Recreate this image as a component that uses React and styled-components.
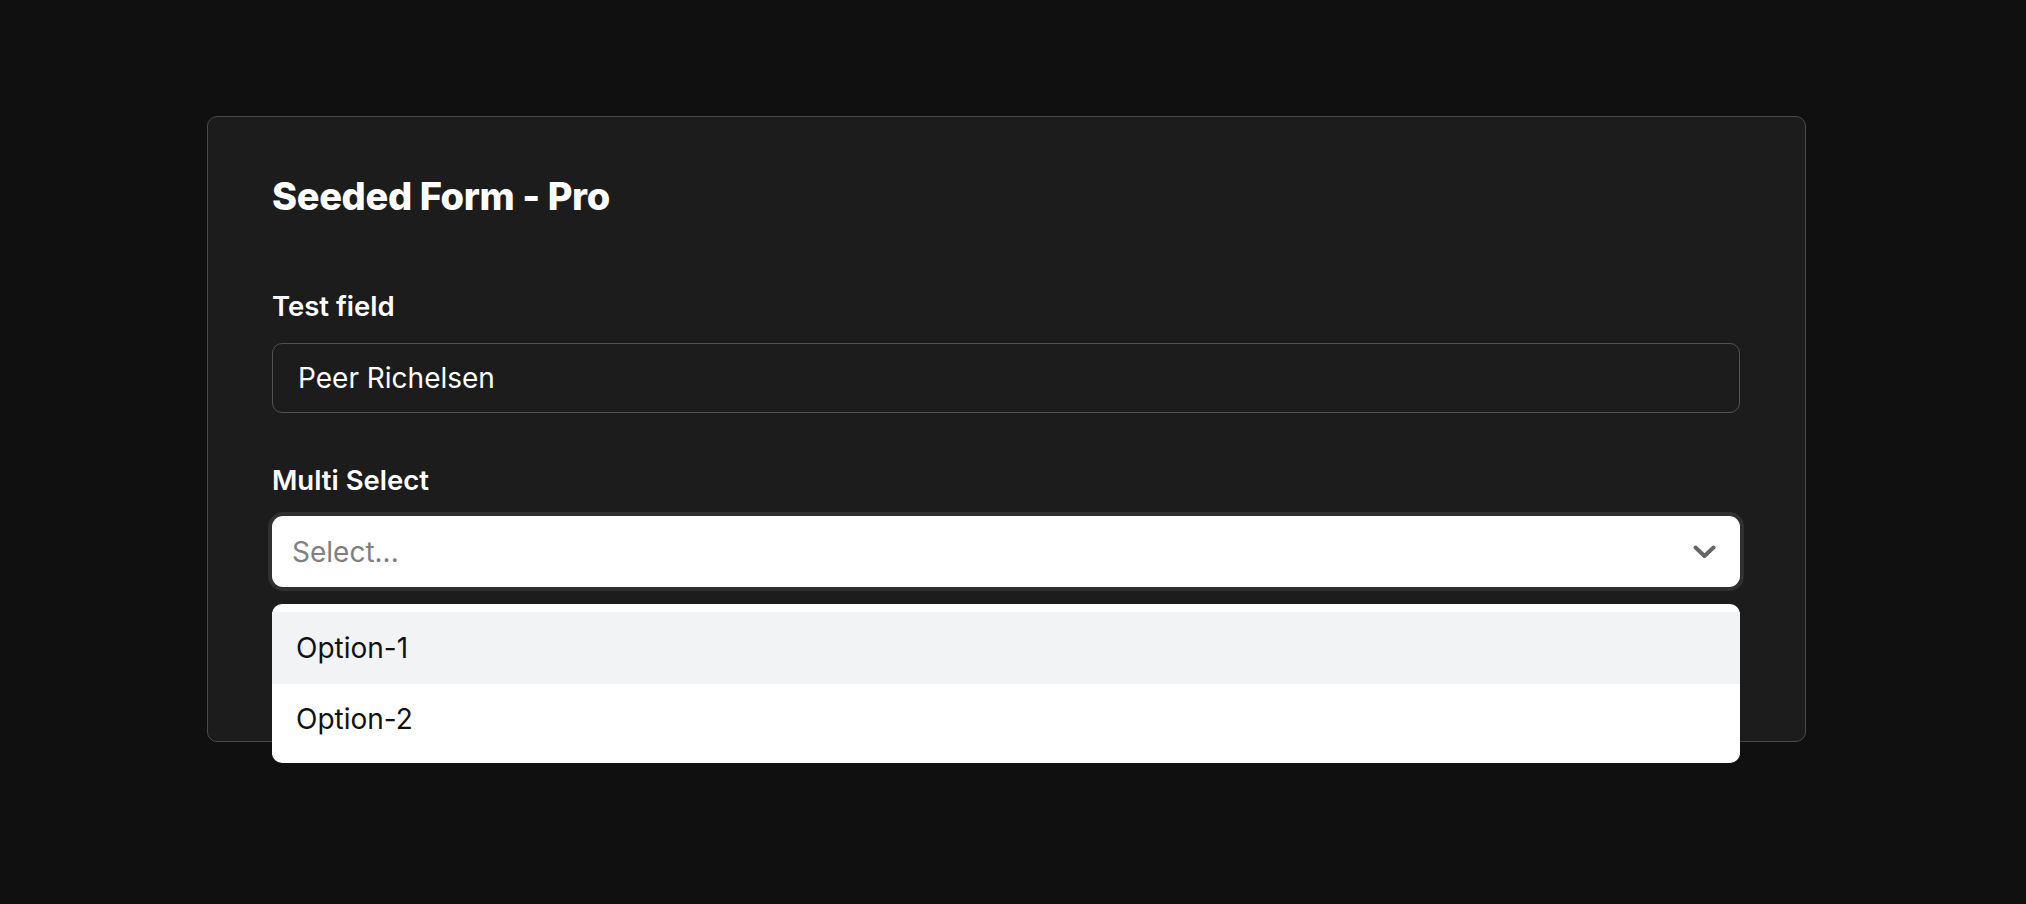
import React from "react";
import styled, { createGlobalStyle } from "styled-components";

const Global = createGlobalStyle`
  html, body { margin: 0; padding: 0; background: #101010; }
  body { font-family: Inter, "Noto Sans", sans-serif; -webkit-font-smoothing: antialiased; }
  #root { min-height: 904px; }
`;

const Page = styled.div`
  min-height: 904px;
  padding: 116px 0 0 207px;
  box-sizing: border-box;
`;

const Card = styled.form`
  width: 1599px;
  box-sizing: border-box;
  background: #1c1c1c;
  border: 1px solid #4a4a4a;
  border-radius: 10px;
  padding: 60px 65px 154px 64px;
  display: flex;
  flex-direction: column;
`;

const Title = styled.h1`
  margin: 0;
  font-family: Inter, sans-serif;
  font-weight: 800;
  font-size: 38px;
  line-height: 38px;
  letter-spacing: -0.01em;
  color: #ffffff;
`;

const Field = styled.div`
  display: flex;
  flex-direction: column;
  gap: ${(p) => p.$gap}px;
  margin-top: ${(p) => p.$top}px;
`;

const Label = styled.label`
  font-size: 27.5px;
  line-height: 39px;
  font-weight: 600;
  color: #ffffff;
`;

const TextInput = styled.input`
  box-sizing: border-box;
  height: 70px;
  width: 100%;
  background: #1c1c1c;
  border: 1px solid #525252;
  border-radius: 10px;
  padding: 0 24px 0 25px;
  font-family: Inter, sans-serif;
  font-size: 28px;
  color: #ffffff;
  outline: none;
`;

const SelectWrap = styled.div`
  position: relative;
`;

const SelectBox = styled.div`
  box-sizing: border-box;
  height: 71px;
  background: #ffffff;
  border-radius: 11px;
  box-shadow: 0 0 0 4px #303030;
  display: flex;
  align-items: center;
  justify-content: space-between;
  padding: 0 24px 0 20px;
`;

const Placeholder = styled.span`
  font-size: 28px;
  color: #808080;
`;

const Menu = styled.ul`
  position: absolute;
  left: 0;
  right: 0;
  top: calc(100% + 17px);
  margin: 0;
  padding: 8px 0;
  list-style: none;
  background: #ffffff;
  border-radius: 10px;
  z-index: 2;
`;

const Option = styled.li`
  height: 71.5px;
  display: flex;
  align-items: center;
  padding-left: 24px;
  font-size: 28px;
  color: #111111;
  background: ${(p) => (p.$active ? "#f2f3f5" : "#ffffff")};
`;

const Chevron = () => (
  <svg width="23" height="14" viewBox="0 0 23 14" fill="none">
    <polyline
      points="2.5,2.5 11.5,11 20.5,2.5"
      stroke="#666666"
      strokeWidth="4"
      strokeLinecap="round"
      strokeLinejoin="round"
    />
  </svg>
);

export default function App() {
  return (
    <>
      <Global />
      <Page>
        <Card onSubmit={(e) => e.preventDefault()}>
          <Title>Seeded Form - Pro</Title>
          <Field $top={72} $gap={17}>
            <Label>Test field</Label>
            <TextInput defaultValue="Peer Richelsen" />
          </Field>
          <Field $top={48} $gap={16}>
            <Label>Multi Select</Label>
            <SelectWrap>
              <SelectBox>
                <Placeholder>Select...</Placeholder>
                <Chevron />
              </SelectBox>
              <Menu>
                <Option $active>Option-1</Option>
                <Option>Option-2</Option>
              </Menu>
            </SelectWrap>
          </Field>
        </Card>
      </Page>
    </>
  );
}
